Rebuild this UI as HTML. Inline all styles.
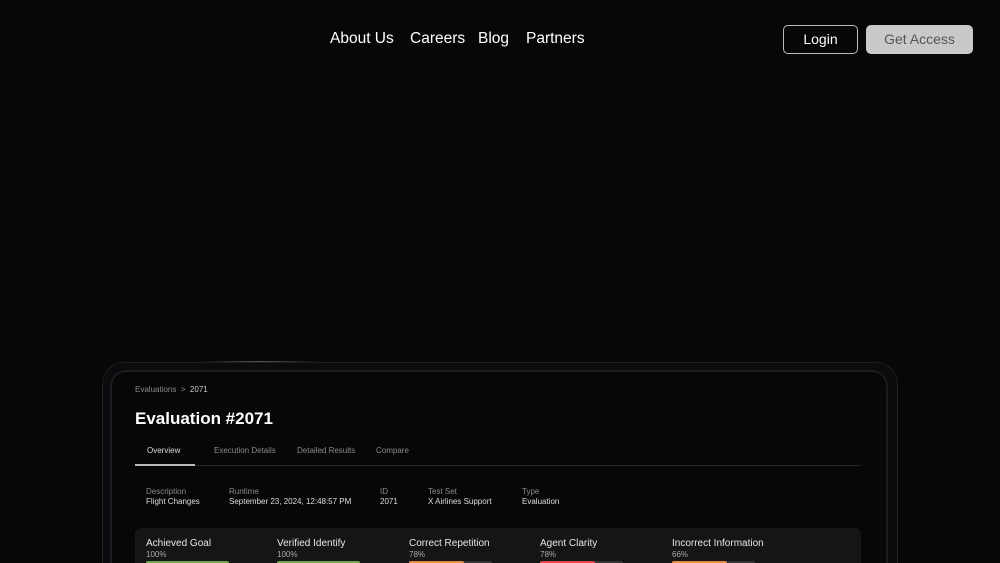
<!DOCTYPE html>
<html style="width:1000px;height:563px;overflow:hidden"><head><style>
*{margin:0;padding:0;box-sizing:border-box}
body{width:1000px;height:563px;overflow:hidden;background:#070708;font-family:"Liberation Sans",sans-serif;position:relative;color:#fff}
.nav{position:absolute;top:30px;font-size:15.5px;color:#fff}
.a{position:absolute}
.outer{position:absolute;left:102px;top:362px;width:796px;height:201px;border:1px solid #1e1e22;border-bottom:none;border-radius:22px 22px 0 0;background:#0b0b0d}
.inner{position:absolute;left:110px;top:370px;width:778px;height:193px;border:2px solid #1c1c20;border-bottom:none;border-radius:16px 16px 0 0;background:#070708}
.s{font-size:8px;color:#8a8a90}
.v{font-size:8px;color:#ddd}
.mt{font-size:10px;color:#e8e8e8}
.pc{font-size:8px;color:#aaa}
.bar{position:absolute;top:561px;height:2px;border-radius:2px 2px 0 0}
</style></head><body>
<div class="nav" style="left:330px">About Us</div>
<div class="nav" style="left:410px">Careers</div>
<div class="nav" style="left:478px">Blog</div>
<div class="nav" style="left:526px">Partners</div>
<div class="a" style="left:783px;top:25px;width:75px;height:29px;border:1px solid #bbb;border-radius:5px;font-size:14px;text-align:center;line-height:27px">Login</div>
<div class="a" style="left:866px;top:25px;width:107px;height:29px;background:#c9c9c9;border-radius:5px;font-size:14px;text-align:center;line-height:29px;color:#555">Get Access</div>
<div class="outer"></div>
<div class="inner"></div>
<div class="a" style="left:200px;top:361px;width:120px;height:1px;background:linear-gradient(90deg,transparent,#555,transparent)"></div>
<div class="a s" style="left:135px;top:385px">Evaluations &nbsp;&gt;&nbsp; <span style="color:#ccc">2071</span></div>
<div class="a" style="left:135px;top:409px;font-size:17px;font-weight:bold">Evaluation #2071</div>
<div class="a" style="left:147px;top:446px;font-size:8px;color:#ddd">Overview</div>
<div class="a s" style="left:214px;top:446px">Execution Details</div>
<div class="a s" style="left:297px;top:446px">Detailed Results</div>
<div class="a s" style="left:376px;top:446px">Compare</div>
<div class="a" style="left:135px;top:465px;width:726px;height:1px;background:#24242a"></div>
<div class="a" style="left:135px;top:464px;width:60px;height:2px;background:#bbb"></div>
<div class="a s" style="left:146px;top:487px">Description</div><div class="a v" style="left:146px;top:497px">Flight Changes</div>
<div class="a s" style="left:229px;top:487px">Runtime</div><div class="a v" style="left:229px;top:497px">September 23, 2024, 12:48:57 PM</div>
<div class="a s" style="left:380px;top:487px">ID</div><div class="a v" style="left:380px;top:497px">2071</div>
<div class="a s" style="left:428px;top:487px">Test Set</div><div class="a v" style="left:428px;top:497px">X Airlines Support</div>
<div class="a s" style="left:522px;top:487px">Type</div><div class="a v" style="left:522px;top:497px">Evaluation</div>
<div class="a" style="left:135px;top:528px;width:726px;height:35px;background:#151518;border-radius:6px 6px 0 0"></div>
<div class="a mt" style="left:146px;top:538px">Achieved Goal</div><div class="a pc" style="left:146px;top:550px">100%</div>
<div class="a mt" style="left:277px;top:538px">Verified Identify</div><div class="a pc" style="left:277px;top:550px">100%</div>
<div class="a mt" style="left:409px;top:538px">Correct Repetition</div><div class="a pc" style="left:409px;top:550px">78%</div>
<div class="a mt" style="left:540px;top:538px">Agent Clarity</div><div class="a pc" style="left:540px;top:550px">78%</div>
<div class="a mt" style="left:672px;top:538px">Incorrect Information</div><div class="a pc" style="left:672px;top:550px">66%</div>
<div class="bar" style="left:146px;width:83px;background:#6fa84a"></div>
<div class="bar" style="left:277px;width:83px;background:#6fa84a"></div>
<div class="bar" style="left:409px;width:83px;background:#333"></div><div class="bar" style="left:409px;width:55px;background:#e88a3c"></div>
<div class="bar" style="left:540px;width:83px;background:#333"></div><div class="bar" style="left:540px;width:55px;background:#e04848"></div>
<div class="bar" style="left:672px;width:83px;background:#333"></div><div class="bar" style="left:672px;width:55px;background:#e88a3c"></div>
</body></html>
